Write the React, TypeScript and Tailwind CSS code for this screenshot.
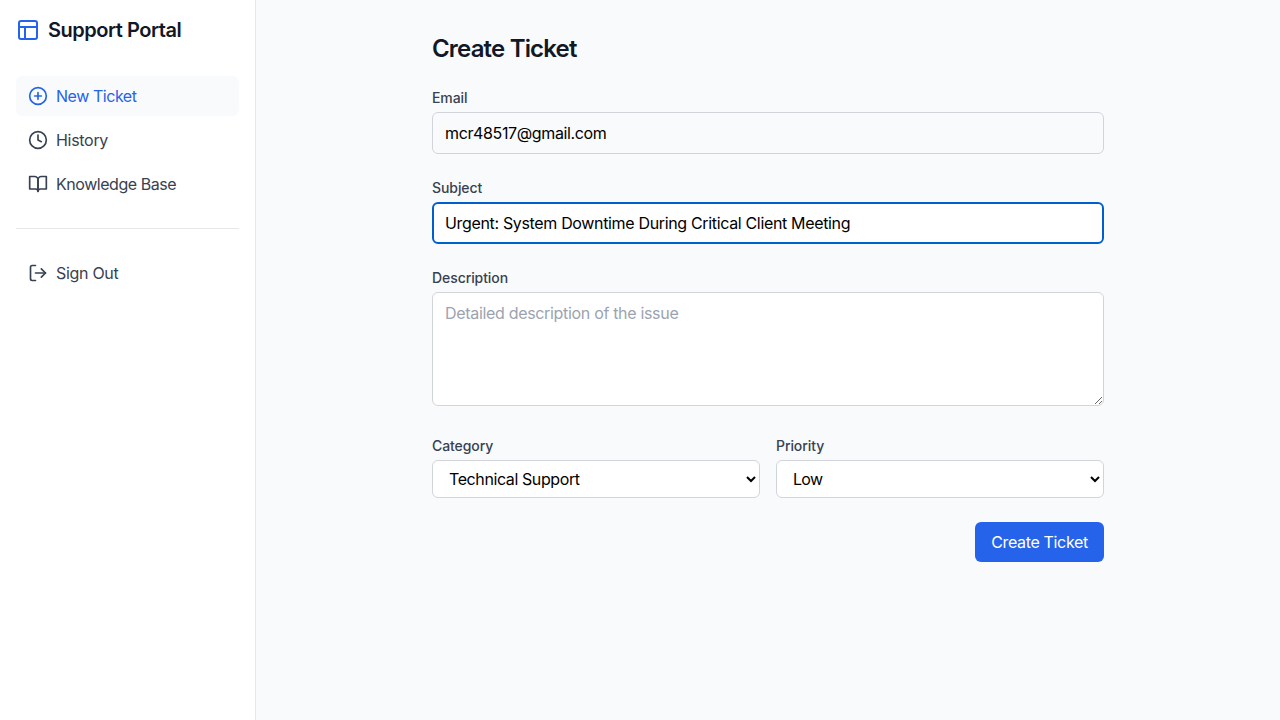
import React from "react";
import { CirclePlus, Clock, LogOut, PanelsTopLeft } from "lucide-react";

const field = "block w-full rounded-md text-base leading-6 text-black";
const plain = "border border-[#d1d5db] px-3";

function BookIcon() {
  return (
    <svg
      className="size-5"
      viewBox="0 0 24 24"
      fill="none"
      stroke="currentColor"
      strokeWidth="2"
      strokeLinecap="round"
      strokeLinejoin="round"
    >
      <path d="M2 3h6a4 4 0 0 1 4 4v14a3 3 0 0 0-3-3H2z" />
      <path d="M22 3h-6a4 4 0 0 0-4 4v14a3 3 0 0 1 3-3h7z" />
    </svg>
  );
}

function Label({ htmlFor, children }: { htmlFor: string; children: React.ReactNode }) {
  return (
    <label htmlFor={htmlFor} className="mb-1 block text-sm font-medium tracking-[-0.08px] text-[#374151]">
      {children}
    </label>
  );
}

export default function App() {
  return (
    <div className="flex h-screen bg-[#f9fafb] font-[Inter,sans-serif] text-base">
      <aside className="w-64 shrink-0 border-r border-[#e5e7eb] bg-white px-4 pt-4">
        <div className="flex h-7 items-center gap-2">
          <PanelsTopLeft className="size-6 text-[#2563eb]" />
          <span className="text-xl font-semibold tracking-[-0.48px] text-[#111827]">Support Portal</span>
        </div>
        <nav className="mt-8 flex flex-col gap-1 tracking-[-0.45px] text-[#374151]">
          <a className="flex h-10 items-center gap-2 rounded-md bg-[#f9fafb] px-3 text-[#2563eb]">
            <CirclePlus className="size-5" />
            New Ticket
          </a>
          <a className="flex h-10 items-center gap-2 px-3 tracking-[-0.3px]">
            <Clock className="size-5" />
            History
          </a>
          <a className="flex h-10 items-center gap-2 px-3">
            <BookIcon />
            Knowledge Base
          </a>
        </nav>
        <div className="mt-6 border-t border-[#e5e7eb] pt-6 tracking-[-0.3px] text-[#374151]">
          <a className="flex h-10 items-center gap-2 px-3">
            <LogOut className="size-5" />
            Sign Out
          </a>
        </div>
      </aside>
      <main className="flex-1 pt-[33px]">
        <form className="mx-auto w-[672px]">
          <h1 className="mb-[23px] text-2xl font-semibold tracking-[-0.82px] text-[#111827]">Create Ticket</h1>
          <div className="mb-6">
            <Label htmlFor="email">Email</Label>
            <input id="email" readOnly defaultValue="mcr48517@gmail.com" className={`${field} ${plain} h-[42px] bg-[#f9fafb] tracking-[-0.37px]`} />
          </div>
          <div className="mb-6">
            <Label htmlFor="subject">Subject</Label>
            <input id="subject" defaultValue="Urgent: System Downtime During Critical Client Meeting" className={`${field} h-[42px] border-2 border-[#005fcc] bg-white px-[11px] tracking-[-0.34px] outline-none`} />
          </div>
          <div className="mb-[30px]">
            <Label htmlFor="description">Description</Label>
            <textarea id="description" placeholder="Detailed description of the issue" className={`${field} ${plain} h-[114px] bg-white py-2 tracking-[-0.32px] placeholder:text-[#9ca3af]`} />
          </div>
          <div className="grid grid-cols-2 gap-4">
            <div>
              <Label htmlFor="category">Category</Label>
              <select id="category" className={`${field} ${plain} h-[38px] bg-white tracking-[-0.4px]`}>
                <option>Technical Support</option>
              </select>
            </div>
            <div>
              <Label htmlFor="priority">Priority</Label>
              <select id="priority" className={`${field} ${plain} h-[38px] bg-white tracking-[-0.7px]`}>
                <option>Low</option>
              </select>
            </div>
          </div>
          <div className="mt-6 flex justify-end">
            <button type="button" className="h-10 w-[129px] rounded-md bg-[#2563eb] tracking-[-0.34px] text-white">Create Ticket</button>
          </div>
        </form>
      </main>
    </div>
  );
}
